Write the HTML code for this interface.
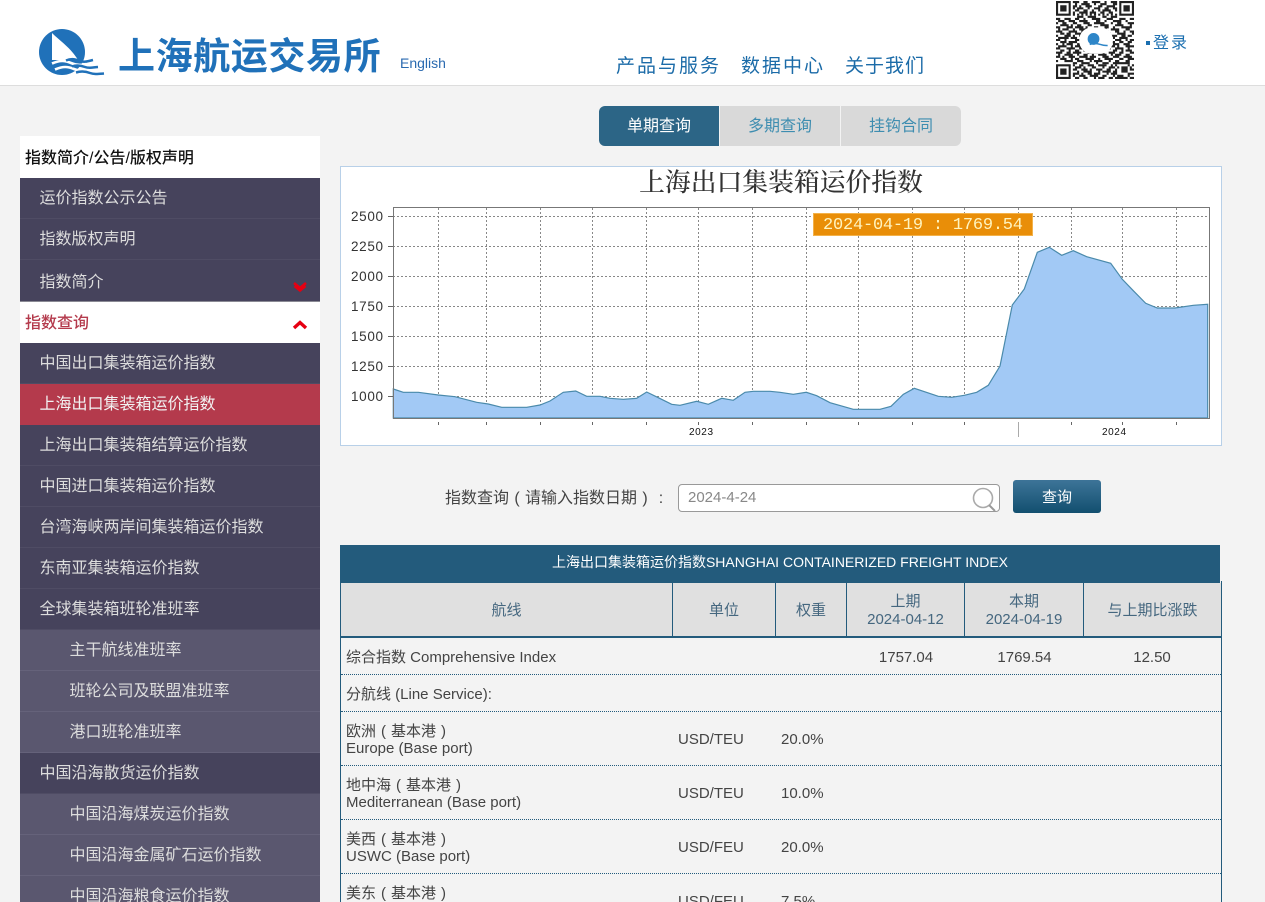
<!DOCTYPE html>
<html lang="zh-CN"><head><meta charset="utf-8"><title>上海航运交易所</title>
<style>
html,body{margin:0;padding:0;width:1265px;height:902px;overflow:hidden;background:#f3f3f3}
body{position:relative;font-family:"Liberation Sans","Noto Sans CJK SC",sans-serif;color:#444}
.a{position:absolute;white-space:nowrap}
.t{position:absolute;white-space:nowrap;line-height:20px;margin-top:-9px;font-size:15px;color:#444}
.c{transform:translateX(-50%)}
.p{display:inline-block;width:1em;text-align:center;font-style:normal}
.r{position:absolute;left:20px;width:300px;height:40px;background:#46435c;border-bottom:1px solid #4f4c64;color:#ddd;font-size:16px;line-height:41px;text-indent:19.5px;white-space:nowrap}
.s{background:#5a576f;border-bottom-color:#65627a;text-indent:49.5px}
.th{position:absolute;top:583px;height:51px;padding-top:2px;background:#e0e0e0;color:#45677f;font-size:15px;line-height:18px;text-align:center;display:flex;align-items:center;justify-content:center}
.d{position:absolute;left:341px;width:880px;height:0;border-top:1px dotted #235b7c}
</style></head><body>
<div class="a" style="left:0;top:0;width:1265px;height:85px;background:#fff;border-bottom:1px solid #ddd"></div>

<svg class="a" style="left:36px;top:26px" width="72" height="52" viewBox="36 26 72 52">
<circle cx="62" cy="52" r="23" fill="#2071b9"/>
<path d="M52 33C60 41 71 48 78 60L52 60Z" fill="#fff"/>
<path d="M52 63.500C60 60 65 60.500 71 63S82 65.500 90 63" fill="none" stroke="#fff" stroke-width="2.600"/>
<path d="M55 69.500C63 66 68 66.500 74 69S86 71.500 94 69" fill="none" stroke="#fff" stroke-width="2.600"/>
<path d="M66 60.500C72 58 76 59.500 80 61S87 61.500 93 60" fill="none" stroke="#2071b9" stroke-width="2.500"/>
<path d="M72 66.500C77 64.500 81 65.500 85 67S92 67.500 98 67" fill="none" stroke="#2071b9" stroke-width="2.500"/>
<path d="M76 72.500C81 71 86 71.500 90 73S98 74 104 73.500" fill="none" stroke="#2071b9" stroke-width="2.500"/>
</svg>
<div class="a" style="left:118px;top:33px;font-size:37px;line-height:48px;letter-spacing:.6px;font-weight:700;color:#2071b9">上海航运交易所</div>
<div class="a" style="left:400px;top:54px;font-size:14px;line-height:18px;color:#2a6ab0">English</div>
<div class="a" style="left:616px;top:54px;font-size:19px;line-height:26px;letter-spacing:2px;color:#1b6ba8">产品与服务</div>
<div class="a" style="left:741px;top:54px;font-size:19px;line-height:26px;letter-spacing:2px;color:#1b6ba8">数据中心</div>
<div class="a" style="left:845px;top:54px;font-size:19px;line-height:26px;letter-spacing:1px;color:#1b6ba8">关于我们</div>

<svg class="a" style="left:1056px;top:1px" width="78" height="78" viewBox="0 0 37 37">
<g fill="none" stroke="#222">
<path d="M.5.5h6v6h-6zM30.5.5h6v6h-6zM.5 30.5h6v6h-6z"/>
<path stroke-width="3" d="M2 3.5h3M32 3.5h3M2 33.5h3"/>
<path d="M8 .5h3M13 .5h2M17 .5h4M23 .5h1M26 .5h3M9 1.5h1M12 1.5h4M18 1.5h1M21 1.5h3M27 1.5h2M8 2.5h2M11 2.5h1M14 2.5h3M20 2.5h2M24 2.5h4M8 3.5h1M10 3.5h3M15 3.5h1M18 3.5h3M23 3.5h2M27 3.5h2M9 4.5h2M13 4.5h2M17 4.5h1M20 4.5h1M22 4.5h4M28 4.5h1M8 5.5h1M11 5.5h4M16 5.5h3M21 5.5h2M25 5.5h2M8 6.5h1M10 6.5h1M12 6.5h1M14 6.5h1M16 6.5h1M18 6.5h1M20 6.5h1M22 6.5h1M24 6.5h1M26 6.5h1M28 6.5h1"/>
<path d="M10 7.5h3M15 7.5h4M22 7.5h2M26 7.5h3M0 8.5h2M4 8.5h3M9 8.5h2M13 8.5h1M17 8.5h4M24 8.5h3M30 8.5h3M35 8.5h2M1 9.5h3M6 9.5h3M11 9.5h4M19 9.5h2M23 9.5h1M27 9.5h4M33 9.5h1M0 10.5h1M3 10.5h2M8 10.5h2M13 10.5h3M18 10.5h5M26 10.5h1M29 10.5h2M34 10.5h3M2 11.5h4M7 11.5h1M10 11.5h2M15 11.5h2M21 11.5h4M28 11.5h4M35 11.5h1M0 12.5h2M5 12.5h3M9 12.5h4M14 12.5h1M18 12.5h2M23 12.5h2M27 12.5h1M31 12.5h5M1 13.5h1M3 13.5h3M8 13.5h1M11 13.5h5M19 13.5h5M26 13.5h4M33 13.5h2"/>
<path d="M0 14.5h3M6 14.5h4M12 14.5h2M22 14.5h3M28 14.5h2M32 14.5h1M35 14.5h2M2 15.5h2M5 15.5h2M9 15.5h4M24 15.5h2M29 15.5h4M36 15.5h1M0 16.5h1M4 16.5h3M8 16.5h1M11 16.5h2M26 16.5h3M31 16.5h2M34 16.5h2M1 17.5h5M7 17.5h3M27 17.5h1M30 17.5h4M0 18.5h2M4 18.5h1M9 18.5h3M28 18.5h3M33 18.5h1M35 18.5h2M2 19.5h3M6 19.5h4M26 19.5h2M30 19.5h2M34 19.5h2M0 20.5h1M3 20.5h1M5 20.5h3M10 20.5h2M27 20.5h3M32 20.5h3M1 21.5h4M7 21.5h1M9 21.5h3M25 21.5h3M29 21.5h1M33 21.5h4M0 22.5h2M5 22.5h4M11 22.5h4M24 22.5h2M28 22.5h4M34 22.5h1"/>
<path d="M2 23.5h2M6 23.5h1M9 23.5h2M13 23.5h3M18 23.5h6M27 23.5h2M31 23.5h1M33 23.5h3M0 24.5h3M5 24.5h2M8 24.5h4M15 24.5h5M22 24.5h1M25 24.5h3M30 24.5h2M35 24.5h2M1 25.5h1M4 25.5h4M10 25.5h1M13 25.5h2M17 25.5h1M20 25.5h4M26 25.5h1M28 25.5h3M33 25.5h2M0 26.5h2M3 26.5h1M6 26.5h3M11 26.5h4M16 26.5h3M22 26.5h3M27 26.5h3M32 26.5h4M2 27.5h3M7 27.5h1M9 27.5h2M14 27.5h4M20 27.5h1M23 27.5h4M30 27.5h2M34 27.5h3M0 28.5h1M4 28.5h4M10 28.5h3M16 28.5h1M18 28.5h4M25 28.5h1M28 28.5h2M33 28.5h2M8 29.5h2M12 29.5h4M19 29.5h1M22 29.5h3M27 29.5h8"/>
<path d="M8 30.5h1M11 30.5h2M15 30.5h3M20 30.5h4M26 30.5h1M28 30.5h1M34 30.5h1M36 30.5h1M9 31.5h3M13 31.5h1M17 31.5h2M22 31.5h1M25 31.5h3M29 31.5h1M31 31.5h3M35 31.5h1M8 32.5h2M12 32.5h3M16 32.5h1M19 32.5h3M24 32.5h2M28 32.5h1M31 32.5h3M35 32.5h2M10 33.5h1M13 33.5h4M20 33.5h1M22 33.5h4M27 33.5h2M31 33.5h3M8 34.5h3M12 34.5h1M15 34.5h2M18 34.5h3M24 34.5h1M26 34.5h3M34 34.5h3M8 35.5h1M11 35.5h3M16 35.5h4M22 35.5h2M27 35.5h1M29 35.5h3M34 35.5h1M9 36.5h2M13 36.5h2M18 36.5h1M20 36.5h3M25 36.5h2M28 36.5h6M35 36.5h2"/>
</g>
<rect x="11" y="12.500" width="16" height="12.500" rx="6" fill="#fff"/>
<circle cx="17.800" cy="18" r="2.800" fill="#2e86c8"/>
<path d="M16 20.600c2-.8 3.500-.5 5 0s2.500.6 3.500.5" fill="none" stroke="#2e86c8" stroke-width=".7"/>
</svg>
<div class="a" style="left:1146px;top:41px;width:4px;height:4px;background:#1b6fb0"></div>
<div class="a" style="left:1153px;top:33px;font-size:16px;line-height:21px;letter-spacing:2px;color:#1b6fb0">登录</div>

<!-- tabs -->
<div class="a" style="left:599px;top:106px;width:120px;height:40px;background:#2c6586;border-radius:6px 0 0 6px;color:#fff;font-size:16px;line-height:42px;text-align:center">单期查询</div>
<div class="a" style="left:720px;top:106px;width:120px;height:40px;background:#d9d9d9;color:#3e8db0;font-size:16px;line-height:42px;text-align:center">多期查询</div>
<div class="a" style="left:841px;top:106px;width:120px;height:40px;background:#d9d9d9;border-radius:0 6px 6px 0;color:#3e8db0;font-size:16px;line-height:42px;text-align:center">挂钩合同</div>

<!-- sidebar -->
<div class="a" style="left:20px;top:136px;width:300px;height:42px;background:#fff;color:#111;font-size:16px;font-weight:500;line-height:46px;text-indent:5px">指数简介/公告/版权声明</div>
<div class="r" style="top:178px">运价指数公示公告</div>
<div class="r" style="top:219px">指数版权声明</div>
<div class="r" style="top:260px;height:41px;line-height:46px;border-bottom:1px solid #8a8a94">指数简介</div>
<div class="a" style="left:20px;top:302px;width:300px;height:41px;background:#fff;color:#b43a4c;font-size:16px;font-weight:500;line-height:43px;text-indent:5px">指数查询</div>
<svg class="a" style="left:290px;top:278px" width="20" height="54" viewBox="0 0 20 54"><path d="M4 5L10 10 16 5M4.500 8L10 12.500 15.500 8" fill="none" stroke="#e60012" stroke-width="2.600"/><path d="M4 50L10 44.500 16 50" fill="none" stroke="#e60012" stroke-width="3.400"/></svg>
<div class="r" style="top:343px">中国出口集装箱运价指数</div>
<div class="r" style="top:384px;background:#b43a4c;border-bottom-color:#b43a4c;color:#f2f2f2">上海出口集装箱运价指数</div>
<div class="r" style="top:425px">上海出口集装箱结算运价指数</div>
<div class="r" style="top:466px">中国进口集装箱运价指数</div>
<div class="r" style="top:507px">台湾海峡两岸间集装箱运价指数</div>
<div class="r" style="top:548px">东南亚集装箱运价指数</div>
<div class="r" style="top:589px">全球集装箱班轮准班率</div>
<div class="r s" style="top:630px">主干航线准班率</div>
<div class="r s" style="top:671px">班轮公司及联盟准班率</div>
<div class="r s" style="top:712px">港口班轮准班率</div>
<div class="r" style="top:753px">中国沿海散货运价指数</div>
<div class="r s" style="top:794px">中国沿海煤炭运价指数</div>
<div class="r s" style="top:835px">中国沿海金属矿石运价指数</div>
<div class="r s" style="top:876px">中国沿海粮食运价指数</div>

<!-- chart -->
<svg class="a" style="left:340px;top:166px" width="882" height="280" viewBox="340 166 882 280">
<rect x="340.500" y="166.500" width="881" height="279" fill="#fff" stroke="#b8d0e8"/>
<text x="781" y="191" text-anchor="middle" font-family="'Noto Serif CJK SC',serif" font-size="25.800" font-weight="500" fill="#333">上海出口集装箱运价指数</text>
<g stroke="#888" stroke-dasharray="2 2" stroke-width="1" fill="none">
<path d="M393 216.500H1209M393 246.500H1209M393 276.500H1209M393 306.500H1209M393 336.500H1209M393 366.500H1209M393 396.500H1209"/>
<path d="M438.500 208V418M486.500 208V418M540.500 208V418M592.500 208V418M646.500 208V418M698.500 208V418M752.500 208V418M806.500 208V418M858.500 208V418M912.500 208V418M964.500 208V418M1018.500 208V418M1071.500 208V418M1122.500 208V418M1176.500 208V418"/>
</g>
<path d="M393.300 389L403.300 392.300 418.300 392.300 438.300 395 455 396.700 476.700 402.300 488.300 404 501.700 407.300 526.700 407.300 540 405 550 401 563.300 392.300 575.700 391 586.700 396.300 600 396.300 610 398.300 623.300 399.300 636.700 398.300 646.700 392 658.300 397.700 671.700 404.300 680 405.300 696.700 401.300 708.300 404.300 721.700 398.300 733.300 400.300 745 392.300 753.300 391.300 770 391.300 780 392.300 793.300 394.300 806.300 392.300 816.700 395.700 830 402.700 853.300 409.300 880 409.300 891 406.300 903.300 394.300 914.300 388.300 938.300 396.300 951.700 397.300 964.300 395.300 976.700 392.300 988.300 385.300 1000 366 1012.300 305 1024.300 289 1037.300 252.300 1049.300 247.300 1061.700 255.300 1073.300 250.700 1086.700 256.700 1110.700 263.300 1122.300 279.300 1133.300 290.700 1145.700 303.300 1157.300 308 1175 308 1193.300 305.300 1207.700 304.300V418H393.300Z" fill="#a2c9f5" stroke="#4a8aab" stroke-width="1.200"/>
<rect x="393.500" y="207.500" width="816" height="211" fill="none" stroke="#777"/>
<g stroke="#666" fill="none">
<path d="M388 216.500h5M388 246.500h5M388 276.500h5M388 306.500h5M388 336.500h5M388 366.500h5M388 396.500h5"/>
<path d="M438.500 422v3M486.500 422v3M540.500 422v3M592.500 422v3M646.500 422v3M698.500 422v3M752.500 422v3M806.500 422v3M858.500 422v3M912.500 422v3M964.500 422v3M1071.500 422v3M1122.500 422v3M1176.500 422v3"/>
<path d="M1018.500 422v15" stroke="#aaa"/>
</g>
<g font-family="'Liberation Sans',sans-serif" font-size="13.500" fill="#333">
<text x="351" y="221" textLength="32">2500</text><text x="351" y="251" textLength="32">2250</text><text x="351" y="281" textLength="32">2000</text><text x="351" y="311" textLength="32">1750</text><text x="351" y="341" textLength="32">1500</text><text x="351" y="371" textLength="32">1250</text><text x="351" y="401" textLength="32">1000</text>
</g>
<g font-family="'Liberation Sans',sans-serif" font-size="10" fill="#111"><text x="689" y="435" textLength="24">2023</text><text x="1102" y="435" textLength="24">2024</text></g>
<rect x="813.500" y="213.500" width="219" height="22" fill="#e98e08" stroke="#f3b24a"/>
<text x="823" y="229" font-family="'Liberation Mono',monospace" font-size="17" fill="#fff4bf" textLength="200">2024-04-19 : 1769.54</text>
</svg>

<!-- search -->
<div class="t" style="left:445px;top:498px;font-size:16px;color:#444">指数查询<i class="p">(</i>请输入指数日期<i class="p">)</i><i class="p">:</i></div>
<div class="a" style="left:678px;top:484px;width:320px;height:26px;background:#fff;border:1px solid #999;border-radius:4px"></div>
<div class="t" style="left:688px;top:497px;font-size:15px;color:#888">2024-4-24</div>
<svg class="a" style="left:970px;top:486px" width="28" height="27" viewBox="0 0 28 27"><circle cx="13" cy="12" r="9.500" fill="none" stroke="#aaa" stroke-width="1.600"/><path d="M19 19l6 6" stroke="#999" stroke-width="2"/></svg>
<div class="a" style="left:1013px;top:480px;width:88px;height:33px;border-radius:3px;background:linear-gradient(#3d7498,#124f6f);color:#fff;font-size:15px;line-height:35px;text-align:center">查询</div>

<!-- table -->
<div class="a" style="left:340px;top:545px;width:880px;height:38px;background:#235b7c;color:#fff;font-size:14px;line-height:34px;text-align:center">上海出口集装箱运价指数SHANGHAI CONTAINERIZED FREIGHT INDEX</div>
<div class="a" style="left:340px;top:583px;width:1px;height:319px;background:#235b7c"></div>
<div class="a" style="left:1221px;top:581px;width:1px;height:321px;background:#235b7c"></div>
<div class="th" style="left:341px;width:331px">航线</div>
<div class="th" style="left:673px;width:102px">单位</div>
<div class="th" style="left:776px;width:70px">权重</div>
<div class="th" style="left:847px;width:117px">上期<br>2024-04-12</div>
<div class="th" style="left:965px;width:118px">本期<br>2024-04-19</div>
<div class="th" style="left:1084px;width:137px">与上期比涨跌</div>
<div class="a" style="left:340px;top:636px;width:882px;height:2px;background:#235b7c"></div>
<div class="a" style="left:672px;top:583px;width:1px;height:53px;background:#235b7c"></div>
<div class="a" style="left:775px;top:583px;width:1px;height:53px;background:#235b7c"></div>
<div class="a" style="left:846px;top:583px;width:1px;height:53px;background:#235b7c"></div>
<div class="a" style="left:964px;top:583px;width:1px;height:53px;background:#235b7c"></div>
<div class="a" style="left:1083px;top:583px;width:1px;height:53px;background:#235b7c"></div>

<div class="t" style="left:346px;top:657px">综合指数 Comprehensive Index</div>
<div class="t c" style="left:906px;top:657px">1757.04</div>
<div class="t c" style="left:1024.500px;top:657px">1769.54</div>
<div class="t c" style="left:1152px;top:657px">12.50</div>
<div class="d" style="top:674px"></div>
<div class="t" style="left:346px;top:694px">分航线 (Line Service):</div>
<div class="d" style="top:711px"></div>
<div class="t" style="left:346px;top:731px">欧洲<i class="p">(</i>基本港<i class="p">)</i></div>
<div class="t" style="left:346px;top:748px">Europe (Base port)</div>
<div class="t" style="left:678px;top:739px">USD/TEU</div>
<div class="t" style="left:781px;top:739px">20.0%</div>
<div class="d" style="top:765px"></div>
<div class="t" style="left:346px;top:785px">地中海<i class="p">(</i>基本港<i class="p">)</i></div>
<div class="t" style="left:346px;top:802px">Mediterranean (Base port)</div>
<div class="t" style="left:678px;top:793px">USD/TEU</div>
<div class="t" style="left:781px;top:793px">10.0%</div>
<div class="d" style="top:819px"></div>
<div class="t" style="left:346px;top:839px">美西<i class="p">(</i>基本港<i class="p">)</i></div>
<div class="t" style="left:346px;top:856px">USWC (Base port)</div>
<div class="t" style="left:678px;top:847px">USD/FEU</div>
<div class="t" style="left:781px;top:847px">20.0%</div>
<div class="d" style="top:873px"></div>
<div class="t" style="left:346px;top:893px">美东<i class="p">(</i>基本港<i class="p">)</i></div>
<div class="t" style="left:678px;top:901px">USD/FEU</div>
<div class="t" style="left:781px;top:901px">7.5%</div>
</body></html>
